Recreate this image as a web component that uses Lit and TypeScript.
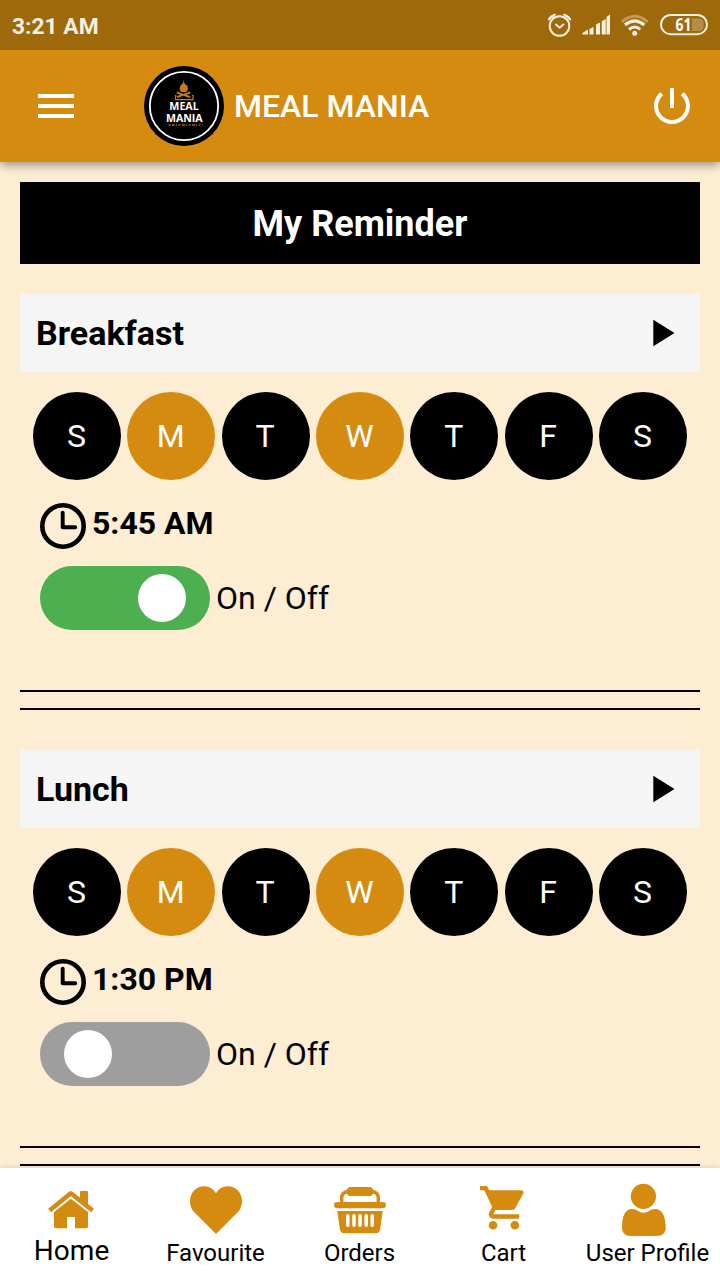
import { LitElement, html, css } from "lit";
import { customElement, property } from "lit/decorators.js";
import { classMap } from "lit/directives/class-map.js";

const DAYS = ["S", "M", "T", "W", "T", "F", "S"];

@customElement("status-bar")
class StatusBar extends LitElement {
  static styles = css`
    :host { display: flex; justify-content: space-between; height: 50px; background: #9e690a; color: #f6efe2;
      position: relative; z-index: 2; }
    .time { font-size: 22.8px; font-weight: 700; line-height: 53px; padding-left: 12px; }
    svg { display: block; }
    .level { font: 700 17px "Open Sans", Roboto, sans-serif; }
  `;
  render() {
    return html`
      <span class="time">3:21 AM</span>
      <svg width="180" height="50" viewBox="540 0 180 50" fill="none" stroke="#f6efe2">
        <circle cx="559.5" cy="26" r="9.8" stroke-width="2" />
        <path d="M549 19.3Q550.5 16.5 554.5 14.8M564.5 14.8Q568.5 16.5 570 19.3" stroke-width="2.4" stroke-linecap="round" />
        <path d="M556 24.5l3.6 3.2 3.8-3.2" stroke-width="2" stroke-linecap="round" stroke-linejoin="round" />
        <g fill="#f6efe2" stroke="none">
          <path d="M582.5 34.5V33l5.500-3.400v4.900zM589.500 28.900l4-2v7.600h-4zM596 24.600l4-2v11.900h-4zM601.700 21.300l4-2.400v15.600h-4zM606.500 17l3.500-2.600v20.100h-3.500z" />
          <circle cx="634.7" cy="33.2" r="2.500" />
        </g>
        <path d="M621.700 22Q634.7 10.500 647.700 22" stroke-width="3" opacity=".38" />
        <path d="M625 25Q634.7 16.800 644.300 25" stroke-width="3.300" />
        <path d="M629 29.500Q634.7 24.500 640.300 29.500" stroke-width="3" />
        <path d="M668 18.500H699a4.500 4.500 0 0 1 4.500 4.500v3.500a4.500 4.500 0 0 1-4.500 4.500H692V18.500z" fill="#b58d48" stroke="none" />
        <rect x="667" y="18" width="24.500" height="13.500" fill="#9e690a" stroke="none" />
        <rect x="661" y="15" width="46" height="19.200" rx="9.600" stroke-width="2" />
        <text class="level" x="675.500" y="30.800" fill="#fff" stroke="none" textLength="16" lengthAdjust="spacingAndGlyphs">61</text>
      </svg>
    `;
  }
}

@customElement("app-header")
class AppHeader extends LitElement {
  static styles = css`
    :host { display: flex; align-items: center; height: 112px; box-sizing: border-box; padding: 0 24px 0 32px;
      background: #d48b10; color: #fff; box-shadow: 0 2px 10px rgba(0, 0, 0, .45); position: relative; }
    svg { display: block; flex: none; }
    .logo { margin: 0 10px 0 64px; }
    .name { font-size: 32px; font-weight: 500; flex: 1; white-space: nowrap; }
    .mark { font: 700 10.6px "Open Sans", Roboto, sans-serif; }
  `;
  render() {
    return html`
      <svg width="48" height="48" viewBox="0 0 24 24" fill="#fff"><path d="M3 18h18v-2H3v2zm0-5h18v-2H3v2zm0-7v2h18V6H3z" /></svg>
      <svg class="logo" width="80" height="80" viewBox="0 0 80 80">
        <circle cx="40" cy="40" r="40" fill="#000" />
        <circle cx="40" cy="40" r="34.2" fill="none" stroke="#fff" stroke-width="1.8" />
        <path d="M39.500 14l1 3.500 3 2.500.500 3-1.500 3h-5.500l-1.500-3 1-3.500 2.500-2.500zM33.500 25.500l6 2.500 6-2.500 1.200 1.800-4 1.500 4 1.600-1.200 1.600-6-2.200-6 2.200-1.200-1.600 4-1.600-4-1.500z" fill="#c57b16" />
        <path d="M32.500 29.500h-1v4.200h17.500v-4.200h-1" fill="none" stroke="#c57b16" stroke-width="1.200" />
        <g class="mark" fill="#fff">
          <text x="25.300" y="44.200" textLength="29.500" lengthAdjust="spacingAndGlyphs">MEAL</text>
          <text x="22" y="55.900" textLength="36.500" lengthAdjust="spacing">MANIA</text>
        </g>
        <path d="M24.500 59h34" stroke="#a36218" stroke-width="1.300" stroke-dasharray="2 1.500 3 1 1 1.500" />
      </svg>
      <span class="name">MEAL MANIA</span>
      <svg width="48" height="48" viewBox="0 0 24 24" fill="#fff"><path d="M13 3h-2v10h2V3zm4.830 2.170l-1.420 1.420C17.990 7.860 19 9.810 19 12c0 3.870-3.130 7-7 7s-7-3.130-7-7c0-2.190 1.010-4.140 2.580-5.420L6.170 5.170C4.230 6.820 3 9.260 3 12c0 4.970 4.030 9 9 9s9-4.030 9-9c0-2.740-1.230-5.180-3.170-6.830z" /></svg>
    `;
  }
}

@customElement("meal-reminder")
class MealReminder extends LitElement {
  @property() meal = "";
  @property() time = "";
  @property({ type: Boolean }) on = false;
  @property({ attribute: false }) active: number[] = [];

  static styles = css`
    :host { display: block; height: 456px; color: #000; }
    svg { display: block; }
    .bar { display: flex; align-items: center; justify-content: space-between; height: 78px; box-sizing: border-box;
      padding: 0 25px 0 16px; background: #f5f5f5; font-size: 34px; font-weight: 700; }
    .days { display: flex; justify-content: space-between; margin: 20px 13px 0; }
    .day { width: 88px; height: 88px; border-radius: 50%; background: #000; color: #fff; font-size: 32px;
      line-height: 89px; text-align: center; text-indent: -1px; }
    .picked { background: #d48b10; }
    .time { display: flex; gap: 6px; margin: 23px 0 0 20px; height: 46px; font-size: 32px; font-weight: 700; line-height: 41px; }
    .switch { display: flex; align-items: center; gap: 6px; margin: 17px 0 0 20px; height: 64px; font-size: 32px; }
    .track { display: flex; align-items: center; width: 170px; height: 64px; box-sizing: border-box; padding: 0 24px;
      border-radius: 32px; background: #9e9e9e; }
    .track.on { background: #4caf50; justify-content: flex-end; }
    .knob { width: 48px; height: 48px; border-radius: 50%; background: #fff; }
    .rule { height: 16px; margin-top: 60px; border-top: 2px solid #000; border-bottom: 2px solid #000; }
  `;
  render() {
    return html`
      <div class="bar">${this.meal}
        <svg width="22" height="28" viewBox="0 0 22 28"><path d="M.300.800L21.500 14 .300 27.200z" /></svg>
      </div>
      <div class="days">
        ${DAYS.map((d, i) => html`<span class=${classMap({ day: true, picked: this.active.includes(i) })}>${d}</span>`)}
      </div>
      <div class="time">
        <svg width="46" height="46" viewBox="0 0 46 46" fill="none" stroke="#000">
          <circle cx="23" cy="23" r="20.700" stroke-width="4.600" />
          <path d="M22.700 9.800v14.500h12.500" stroke-width="3.900" stroke-linecap="round" stroke-linejoin="round" />
        </svg>
        <span>${this.time}</span>
      </div>
      <div class="switch">
        <div class=${classMap({ track: true, on: this.on })}><div class="knob"></div></div>
        <span>On / Off</span>
      </div>
      <div class="rule"></div>
    `;
  }
}

const ICONS = {
  home: html`<svg width="60" height="56" viewBox="0 0 60 56">
    <path d="M7.600 28.500L28.800 11.300 50.600 28.500" fill="none" stroke="#d48b10" stroke-width="4.600" stroke-linejoin="round" />
    <path d="M38 18V10q0-1 1-1h6q1 0 1 1v15z" />
    <path d="M28.800 16.700L46 30V44.500q0 1.800-1.800 1.800H33V35h-8v11.300H13.800q-1.800 0-1.800-1.800V30z" />
  </svg>`,
  heart: html`<svg width="60" height="56" viewBox="0 0 60 56">
    <path d="M30 52L8.300 30.300C2.500 24.300 2.600 14.500 8 8.500 14.400 2 25.500 2.700 30 11.500 34.500 2.700 45.600 2 52 8.500c5.400 6 5.500 15.800-.3 21.800z" />
  </svg>`,
  basket: html`<svg width="60" height="56" viewBox="0 0 60 56">
    <path d="M11.700 21v-5q0-6 7-6.500h22.600q7 .5 7 6.500v5" fill="none" stroke="#d48b10" stroke-width="3.400" />
    <path d="M20 5h20q1.500 0 2.500 1.500 3 3 0 6Q41.500 14 40 14H20q-1.500 0-2.500-1.500-3-3 0-6Q18.500 5 20 5z" />
    <rect x="4" y="20" width="52" height="6.200" rx="3.100" />
    <path d="M7.300 29h45.400l-2.500 18q-.5 4.200-4.700 4.200h-31q-4.200 0-4.700-4.200z" />
    <path d="M17.800 33.800v9.500M24 33.800v9.500M30 33.800v9.500M36.200 33.800v9.500M42.200 33.800v9.500" stroke="#fff" stroke-width="3.500" stroke-linecap="round" />
  </svg>`,
  cart: html`<svg width="60" height="56" viewBox="0 0 60 56">
    <path transform="translate(3.800 -.360) scale(2.180)" d="M7 18c-1.100 0-1.990.9-1.990 2S5.900 22 7 22s2-.9 2-2-.9-2-2-2zM1 2v2h2l3.600 7.590-1.350 2.450c-.16.280-.25.610-.25.960 0 1.100.9 2 2 2h12v-2H7.420c-.14 0-.25-.11-.25-.25l.03-.12.9-1.630h7.450c.75 0 1.410-.41 1.750-1.030l3.580-6.490c.08-.14.12-.31.12-.48 0-.55-.45-1-1-1H5.210l-.94-2H1zm16 16c-1.100 0-1.990.9-1.990 2s.89 2 1.990 2 2-.9 2-2-.9-2-2-2z" />
  </svg>`,
  user: html`<svg width="60" height="56" viewBox="0 0 60 56">
    <circle cx="25.400" cy="14.300" r="12.600" />
    <path d="M14 27q3.500 0 5.500 1.700 6 4 12 0Q33.500 27 37 27c7.500 0 10.700 8 10.700 18.500 0 5.500-3.200 8.500-8.700 8.500H12.700C7.200 54 4 51 4 45.500 4 35 6.800 27 14 27z" />
  </svg>`,
};

@customElement("tab-bar")
class TabBar extends LitElement {
  static styles = css`
    :host { display: grid; grid-template-columns: repeat(5, 1fr); height: 112px; background: #fff; color: #000;
      box-shadow: 0 -1px 5px rgba(0, 0, 0, .1); position: relative; }
    .tab { display: flex; flex-direction: column; align-items: center; padding-top: 14px; font-size: 24px; line-height: 30px; white-space: nowrap; }
    .tab span { margin-right: 1px; }
    .current { font-size: 28px; line-height: 26px; letter-spacing: .1px; }
    svg { display: block; flex: none; fill: #d48b10; }
  `;
  render() {
    return html`
      <div class="tab current">${ICONS.home}<span>Home</span></div>
      <div class="tab">${ICONS.heart}<span>Favourite</span></div>
      <div class="tab">${ICONS.basket}<span>Orders</span></div>
      <div class="tab">${ICONS.cart}<span>Cart</span></div>
      <div class="tab">${ICONS.user}<span>User Profile</span></div>
    `;
  }
}

@customElement("app-root")
class AppRoot extends LitElement {
  static styles = css`
    :host { display: flex; flex-direction: column; height: 1280px; overflow: hidden; background: #fcedd3; font-family: Roboto, sans-serif; }
    .content { flex: 1; min-height: 0; overflow: hidden; padding: 20px 20px 0; }
    .title { height: 82px; margin: 0 0 30px; background: #000; color: #fff; font-size: 36px; font-weight: 700; line-height: 84px; text-align: center; }
  `;
  render() {
    return html`
      <status-bar></status-bar>
      <app-header></app-header>
      <main class="content">
        <h1 class="title">My Reminder</h1>
        <meal-reminder meal="Breakfast" time="5:45 AM" on .active=${[1, 3]}></meal-reminder>
        <meal-reminder meal="Lunch" time="1:30 PM" .active=${[1, 3]}></meal-reminder>
      </main>
      <tab-bar></tab-bar>
    `;
  }
}
